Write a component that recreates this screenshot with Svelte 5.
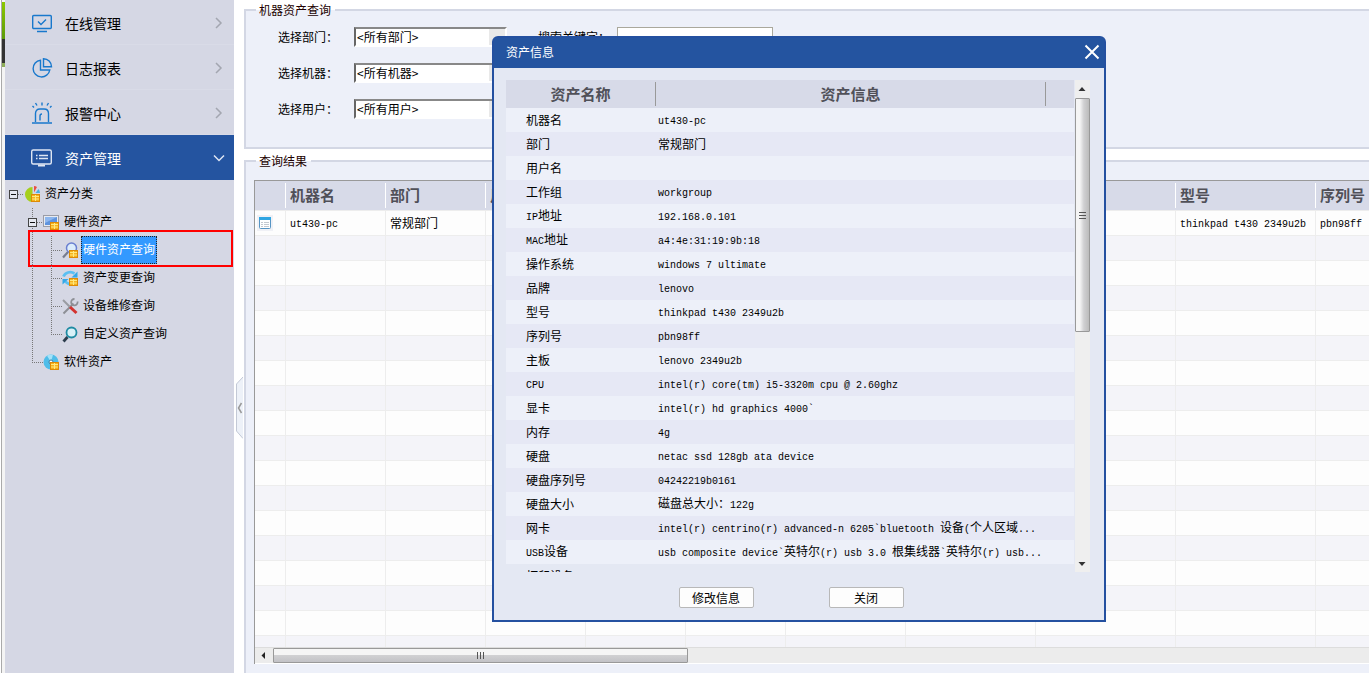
<script lang="ts">
  type TreeNode = { label: string; icon: string; cells: string[]; selected?: boolean };

  const menu = [
    { label: '在线管理', icon: 'monitor' },
    { label: '日志报表', icon: 'pie' },
    { label: '报警中心', icon: 'alarm' },
    { label: '资产管理', icon: 'asset' }
  ];
  let active = $state('资产管理');

  let tree = $state<TreeNode[]>([
    { label: '资产分类', icon: 'root', cells: ['box'] },
    { label: '硬件资产', icon: 'pc', cells: ['blank', 'boxline'] },
    { label: '硬件资产查询', icon: 'search', cells: ['blank', 'pass', 'tee'], selected: true },
    { label: '资产变更查询', icon: 'change', cells: ['blank', 'pass', 'tee'] },
    { label: '设备维修查询', icon: 'repair', cells: ['blank', 'pass', 'tee'] },
    { label: '自定义资产查询', icon: 'custom', cells: ['blank', 'pass', 'end'] },
    { label: '软件资产', icon: 'disc', cells: ['blank', 'end'] }
  ]);

  function select(node: TreeNode) {
    for (const n of tree) n.selected = n === node;
  }

  const filters = [
    { id: 'dept', label: '选择部门：', value: '<所有部门>' },
    { id: 'machine', label: '选择机器：', value: '<所有机器>' },
    { id: 'user', label: '选择用户：', value: '<所有用户>' }
  ];

  const columns = [
    { name: '', width: 31 },
    { name: '机器名', width: 100 },
    { name: '部门', width: 100 },
    { name: '用户名', width: 100 },
    { name: '', width: 100 },
    { name: '', width: 100 },
    { name: '', width: 120 },
    { name: '', width: 130 },
    { name: '', width: 140 },
    { name: '型号', width: 140 },
    { name: '序列号', width: 140 }
  ];
  const result = ['', 'ut430-pc', '常规部门', '', '', '', '', '', '', 'thinkpad t430 2349u2b', 'pbn98ff'];
  const emptyRows = Array.from({ length: 17 });

  const info = [
    ['机器名', 'ut430-pc'],
    ['部门', '常规部门'],
    ['用户名', ''],
    ['工作组', 'workgroup'],
    ['IP地址', '192.168.0.101'],
    ['MAC地址', 'a4:4e:31:19:9b:18'],
    ['操作系统', 'windows 7 ultimate'],
    ['品牌', 'lenovo'],
    ['型号', 'thinkpad t430 2349u2b'],
    ['序列号', 'pbn98ff'],
    ['主板', 'lenovo 2349u2b'],
    ['CPU', 'intel(r) core(tm) i5-3320m cpu @ 2.60ghz'],
    ['显卡', 'intel(r) hd graphics 4000`'],
    ['内存', '4g'],
    ['硬盘', 'netac ssd 128gb ata device'],
    ['硬盘序列号', '04242219b0161'],
    ['硬盘大小', '磁盘总大小：122g'],
    ['网卡', 'intel(r) centrino(r) advanced-n 6205`bluetooth 设备(个人区域...'],
    ['USB设备', 'usb composite device`英特尔(r) usb 3.0 根集线器`英特尔(r) usb...'],
    ['打印设备', '']
  ];

  let open = $state(true);

  // latin runs are set in the half-width face, the rest in the CJK one
  function runs(text: string) {
    return text.match(/[\x00-\x7f]+|[^\x00-\x7f]+/g) ?? [];
  }
</script>

{#snippet mixed(text: string)}{#each runs(text) as run}{#if run.charCodeAt(0) < 128}<span class="half">{run}</span>{:else}{run}{/if}{/each}{/snippet}

{#snippet coins()}
  <rect x="7.500" y="8.500" width="8" height="7" fill="#f6b21b" stroke="#dd8a06" />
  <path d="M8 10.500h7M8 13h7M11.500 9v6" stroke="#ffe880" fill="none" />
{/snippet}

<div class="app">
  <div class="edge"><i class="green"></i><i class="dark"></i><i class="lime"></i></div>

  <aside class="sidebar">
    <nav>
      {#each menu as item}
        <button class="menu-item" class:active={active === item.label} onclick={() => (active = item.label)}>
          <svg class="menu-icon" width="24" height="24" viewBox="0 0 24 24" fill="none" stroke="currentColor" stroke-width="1.4">
            {#if item.icon === 'monitor'}
              <rect x="2.700" y="4.500" width="18.600" height="13" rx="1" />
              <path d="M8 10.500l3 3 5-5M7 20.500h10" />
            {:else if item.icon === 'pie'}
              <path d="M10.500 4.200a8.400 8.400 0 1 0 9.300 9.800h-9.300z" />
              <path d="M13.500 2.700v8h8a8 8 0 0 0-8-8z" />
            {:else if item.icon === 'alarm'}
              <path d="M5.500 21v-8.500q0-4.500 4.500-4.500h4q4.500 0 4.500 4.500V21M2 22h20M10 19.500v-4.500q0-2 2-2" />
              <path d="M12 1.500v3M5.500 2l1.500 2.500M18.500 2l-1.500 2.500M2.500 5l1.500 1.500M21.500 5l-1.500 1.500" />
            {:else}
              <rect x="1.700" y="4" width="19.600" height="14" rx="1.500" />
              <path d="M6 9.500h1.500M9 9.500h9M6 12.500h1.500M9 12.500h9" />
              <path d="M8 19.500h7" stroke-width="2" />
            {/if}
          </svg>
          <span>{item.label}</span>
          <svg class="chevron" width="12" height="14" viewBox="0 0 12 14" fill="none" stroke="currentColor" stroke-width="1.500">
            {#if active === item.label}
              <path d="M1 4.500l5 5 5-5" />
            {:else}
              <path d="M3 2l5 5-5 5" />
            {/if}
          </svg>
        </button>
      {/each}
    </nav>

    <ul class="tree">
      {#each tree as node}
        <li class:marked={node.icon === 'search'}>
          {#each node.cells as cell}
            <svg width="19" height="28" viewBox="0 0 19 28" fill="none" stroke="#777" stroke-dasharray="1 1">
              {#if cell === 'pass'}
                <path d="M8.500 0v28" />
              {:else if cell === 'tee'}
                <path d="M8.500 0v28M8 14.500h11" />
              {:else if cell === 'end'}
                <path d="M8.500 0v14M8 14.500h11" />
              {:else if cell !== 'blank'}
                {#if cell === 'boxline'}<path d="M8.500 0v28" />{/if}
                <path d="M13 14.500h6" />
                <rect x="4.500" y="10.500" width="8" height="8" fill="#e6e8f0" stroke="#444" stroke-dasharray="none" />
                <path d="M6 14.500h5" stroke="#111" stroke-dasharray="none" />
              {/if}
            </svg>
          {/each}
          <svg class="node-icon" width="17" height="17" viewBox="0 0 17 17" fill="none">
            {#if node.icon === 'root'}
              <path d="M8.500 1a7.500 7.500 0 1 0 0 15h4V8h-4z" fill="#a6cf1c" />
              <path d="M10 6.500V0a7 7 0 0 1 3 1z" fill="#e94f45" />
              <path d="M11.500 7l3-4a7 7 0 0 1 1.500 4z" fill="#4aaee3" />
              {@render coins()}
            {:else if node.icon === 'pc'}
              <rect x=".5" y="1.500" width="15" height="11" fill="#e8eaf0" stroke="#9a9ca6" />
              <rect x="2" y="3" width="12" height="8" fill="#5f93dd" />
              <path d="M2 3h12l-12 6z" fill="#8db6ee" />
              {@render coins()}
            {:else if node.icon === 'search'}
              <path d="M1 15.500l5-5.500" stroke="#777c8e" stroke-width="2.200" />
              <circle cx="9.500" cy="6" r="5" fill="#dcecfb" stroke="#6a7fd0" stroke-width="1.500" />
              {@render coins()}
            {:else if node.icon === 'change'}
              <path d="M1.500 6.500a7 6 0 0 1 11-3" stroke="#5cc0f2" stroke-width="2.800" />
              <path d="M15.500 1.500v6h-6z" fill="#35a9e8" />
              <path d="M8.500 14a6 5.500 0 0 1-5-2.500" stroke="#5cc0f2" stroke-width="2.800" />
              <path d="M.5 9h6l-6 5.500z" fill="#35a9e8" />
              {@render coins()}
            {:else if node.icon === 'repair'}
              <path d="M1.500 15.500l10-10" stroke="#8d8f95" stroke-width="2" />
              <path d="M15.500 3.500a3.200 3.200 0 1 1-3-2.500" stroke="#8d8f95" stroke-width="1.800" />
              <path d="M1 2l7 7" stroke="#9a9ca2" stroke-width="2" />
              <path d="M8 9l6.500 6" stroke="#d3332f" stroke-width="3" />
            {:else if node.icon === 'custom'}
              <path d="M1.500 15.500l4-4.500" stroke="#2c3d4c" stroke-width="2.800" />
              <circle cx="9.500" cy="6.500" r="5" fill="#d7f1f7" stroke="#1f8ba3" stroke-width="1.800" />
            {:else}
              <circle cx="8" cy="8" r="7.500" fill="#4fbde9" />
              <path d="M8 8L4 1.700A7.500 7.500 0 0 1 10 .8z" fill="#a5e2f8" />
              <circle cx="8" cy="8" r="2" fill="#fff" stroke="#347b9e" />
              {@render coins()}
            {/if}
          </svg>
          <button class="node" class:selected={node.selected} onclick={() => select(node)}>{node.label}</button>
        </li>
      {/each}
    </ul>
  </aside>

  <div class="gutter">
    <button class="collapse" aria-label="收起">
      <svg width="8" height="64" viewBox="0 0 8 64" fill="none">
        <path d="M8 1L1.500 8v47L8 62.500z" fill="#edf1f8" />
        <path d="M8 1L1.500 8v47L8 62.500" stroke="#c3c9d6" />
        <path d="M6.500 27L3.500 32l3 5" stroke="#999" stroke-width="1.500" />
      </svg>
    </button>
  </div>

  <main>
    <fieldset class="query">
      <legend>机器资产查询</legend>
      <div class="filters">
        {#each filters as f, i}
          <div class="filter">
            <label for={f.id}>{f.label}</label>
            <select id={f.id}><option>{f.value}</option></select>
            {#if i === 0}
              <label class="key-label" for="keyword">搜索关键字：</label>
              <input id="keyword" type="text" />
            {/if}
          </div>
        {/each}
      </div>
    </fieldset>

    <fieldset class="results">
      <legend>查询结果</legend>
      <div class="grid">
        <div class="grid-view">
          <table>
            <colgroup>
              {#each columns as c}<col style:width="{c.width}px" />{/each}
            </colgroup>
            <thead>
              <tr>
                {#each columns as c}<th><span>{c.name}</span></th>{/each}
              </tr>
            </thead>
            <tbody>
              <tr>
                {#each result as value, i}
                  <td>
                    {#if i === 0}
                      <svg class="row-icon" width="16" height="16" viewBox="0 0 16 16">
                        <rect x="2.500" y="2.500" width="11" height="11" rx="1" fill="#fff" stroke="#5795c4" />
                        <path d="M2 2h12v3H2z" fill="#2fa5e2" />
                        <path d="M4 7.500h2M7 7.500h5M4 9.500h2M7 9.500h5M4 11.500h2M7 11.500h5" stroke="#c4c9d0" />
                      </svg>
                    {:else}{@render mixed(value)}{/if}
                  </td>
                {/each}
              </tr>
              {#each emptyRows as _}
                <tr>{#each columns as _c}<td></td>{/each}</tr>
              {/each}
            </tbody>
          </table>
        </div>
        <div class="hbar">
          <svg width="18" height="15" viewBox="0 0 18 15"><path d="M10 4v7L6.500 7.500z" fill="#222" /></svg>
          <div class="thumb"><i></i><i></i><i></i></div>
        </div>
      </div>
    </fieldset>
  </main>

  {#if open}
    <div class="dialog" role="dialog" aria-labelledby="dlg-title">
      <header>
        <h2 id="dlg-title">资产信息</h2>
        <button class="close" aria-label="关闭窗口" onclick={() => (open = false)}>
          <svg width="16" height="16" viewBox="0 0 16 16"><path d="M1.500 1.500l13 13M14.500 1.500l-13 13" stroke="#fff" stroke-width="2" /></svg>
        </button>
      </header>
      <div class="pane">
        <div class="pane-view">
          <table>
            <colgroup><col class="c-name" /><col /><col class="c-rest" /></colgroup>
            <thead>
              <tr><th><span>资产名称</span></th><th><span>资产信息</span></th><th></th></tr>
            </thead>
            <tbody>
              {#each info as [name, value]}
                <tr><td>{@render mixed(name)}</td><td colspan="2">{@render mixed(value)}</td></tr>
              {/each}
            </tbody>
          </table>
        </div>
        <div class="vbar">
          <svg width="15" height="18" viewBox="0 0 15 18"><path d="M3.500 11h7L7 7z" fill="#333" /></svg>
          <div class="thumb"><i></i><i></i><i></i></div>
          <svg width="15" height="18" viewBox="0 0 15 18"><path d="M3.500 8h7L7 12z" fill="#333" /></svg>
        </div>
      </div>
      <footer>
        <button>修改信息</button>
        <button onclick={() => (open = false)}>关闭</button>
      </footer>
    </div>
  {/if}
</div>

<style>
  :global(body) {
    margin: 0;
    background: #fff;
  }

  .app {
    position: relative;
    display: flex;
    height: 100vh;
    overflow: hidden;
    font: 12px/16px "Noto Sans CJK SC", sans-serif;
    color: #000;
  }
  .app :is(button, input, select) {
    font: inherit;
    color: inherit;
  }
  button {
    padding: 0;
    border: 0;
    background: none;
    cursor: pointer;
  }
  svg {
    display: block;
    flex: none;
  }
  .half {
    font-family: "Liberation Mono", monospace;
    font-size: 10px;
    white-space: pre;
  }

  .edge {
    box-sizing: border-box;
    flex: none;
    width: 5px;
    padding: 2px 0 0 1px;
    background: linear-gradient(90deg, #fff 1px, #aaa 1px, #aaa 2px, #f4f4f4 2px);
  }
  .edge i {
    display: block;
    margin-left: 1px;
  }
  .green {
    height: 37px;
    background: linear-gradient(#8cc800, #5b9a0a);
  }
  .dark {
    height: 24px;
    background: #333;
  }
  .lime {
    height: 4px;
    background: #8fae5a;
  }

  .sidebar {
    flex: none;
    width: 229px;
    background: #d5d7e4;
  }
  .menu-item {
    display: flex;
    align-items: center;
    box-sizing: border-box;
    width: 100%;
    height: 45px;
    padding: 2px 9px 0 25px;
    border-bottom: 1px solid #d9dbe7;
    text-align: left;
  }
  .app .menu-item {
    font-size: 14px;
  }
  .menu-item span {
    flex: 1;
    margin-left: 11px;
  }
  .menu-icon {
    color: #1878cc;
  }
  .chevron {
    color: #a3a6b0;
  }
  .menu-item.active {
    background: #2454a0;
    border-color: #2454a0;
  }
  .app .menu-item.active {
    color: #fff;
  }
  .active .menu-icon,
  .active .chevron {
    color: #dfe6f3;
  }

  .tree {
    margin: 0;
    padding: 0;
    list-style: none;
  }
  .tree li {
    position: relative;
    display: flex;
    align-items: center;
    height: 28px;
  }
  .node {
    height: 28px;
    padding: 0 1px 2px;
    margin-left: 2px;
    border: 1px solid transparent;
  }
  .app .node.selected {
    background: #3399ff;
    border: 1px dotted #222;
    color: #fff;
  }
  .marked::after {
    content: "";
    position: absolute;
    inset: -6px 1px -3px 23px;
    border: 2px solid #f00;
    pointer-events: none;
  }

  .gutter {
    flex: none;
    display: flex;
    flex-direction: column;
    justify-content: center;
    align-items: flex-end;
    box-sizing: border-box;
    width: 10px;
    padding: 142px 1px 0 0;
  }

  main {
    flex: 1;
    min-width: 0;
    display: flex;
    flex-direction: column;
    gap: 3px;
    margin-right: -20px;
    padding-top: 1px;
  }
  fieldset {
    min-width: 0;
    margin: 0;
    padding: 0;
    border: 2px solid #d3d7e4;
    background: #edf0f9;
  }
  legend {
    margin-left: 10px;
    padding: 0 4px 0 3px;
    background: linear-gradient(#fff 50%, #edf0f9 50%);
    color: #200;
    line-height: 18px;
  }
  .filters {
    padding: 0 0 20px 32px;
  }
  .filter {
    display: flex;
    align-items: center;
    height: 36px;
  }
  .filter label {
    width: 76px;
  }
  .filter .key-label {
    width: 79px;
    margin-left: 31px;
  }
  .filter select,
  .filter input {
    box-sizing: border-box;
    height: 20px;
    border-radius: 0;
  }
  .filter select {
    appearance: none;
    width: 153px;
    padding: 0 18px 0 1px;
    border: 2px solid;
    border-color: #888 #fff #fff #666;
    background: linear-gradient(#e9e9e9, #e9e9e9) right / 16px 100% no-repeat #fff;
  }
  .filter input {
    width: 156px;
    border: 1px solid #aaa89c;
    background: #fff;
  }

  .results {
    flex: 1;
    min-height: 0;
    border-bottom: 0;
  }
  .grid {
    display: flex;
    flex-direction: column;
    margin: 10px 0 0 8px;
    height: calc(100vh - 190px);
    border: solid #999;
    border-width: 1px 0 0 1px;
    background: #fff;
  }
  .grid-view {
    flex: 1;
    min-height: 0;
    overflow: hidden;
    background: #fdfdfd;
  }
  table {
    table-layout: fixed;
    border-collapse: separate;
    border-spacing: 0;
  }
  th {
    padding: 0;
    background: #d7dae8;
    color: #505058;
    font-size: 15px;
    font-weight: bold;
    white-space: nowrap;
    overflow: hidden;
  }
  td {
    box-sizing: border-box;
    padding: 0;
    white-space: nowrap;
    overflow: hidden;
  }
  .grid table {
    width: 1201px;
  }
  .grid th {
    height: 29px;
    text-align: left;
  }
  .grid th span {
    display: block;
    height: 25px;
    padding-left: 4px;
    border-right: 1px solid #fff;
    line-height: 24px;
  }
  .grid td {
    height: 25px;
    padding-left: 4px;
    border: solid #ededed;
    border-width: 1px 1px 0 0;
    background: #fdfdfd;
  }
  .grid tr:nth-child(even) td {
    background: #f4f4f9;
  }
  .grid td:first-child {
    padding-left: 2px;
  }
  .row-icon {
    background: #f0f1f6;
  }
  .hbar {
    display: flex;
    height: 15px;
    border-top: 1px solid #ddd;
    border-bottom: 1px solid #fff;
    background: #ececec;
  }
  .thumb {
    display: flex;
    align-items: center;
    justify-content: center;
    gap: 2px;
    box-sizing: border-box;
    border: 1px solid #999;
    border-radius: 1px;
  }
  .hbar .thumb {
    width: 415px;
    background: linear-gradient(#f5f5f5 45%, #d0d0d2 50%, #c2c2c6);
  }
  .hbar i {
    width: 1px;
    height: 7px;
    background: #555;
  }

  .dialog {
    position: absolute;
    left: 492px;
    top: 36px;
    box-sizing: border-box;
    width: 614px;
    border: 2px solid #2450a0;
    border-radius: 6px 6px 0 0;
    background: #e4e8f3;
  }
  .dialog header {
    display: flex;
    align-items: center;
    justify-content: space-between;
    height: 28px;
    padding: 0 4px 2px 12px;
    background: #2454a0;
    color: #fff;
  }
  .dialog h2 {
    margin: 0;
    font-size: 12px;
    font-weight: normal;
  }
  .pane {
    display: flex;
    height: 492px;
    margin: 12px 14px 0 12px;
  }
  .pane-view {
    flex: 1;
    min-width: 0;
    overflow: hidden;
  }
  .pane table {
    width: 100%;
  }
  .c-name {
    width: 150px;
  }
  .c-rest {
    width: 28px;
  }
  .pane th {
    height: 28px;
  }
  .pane th span {
    display: block;
    border-right: 1px solid #999;
    line-height: 24px;
  }
  .pane td {
    height: 24px;
    padding-left: 2px;
    background: #edf0f9;
  }
  .pane td:first-child {
    padding-left: 20px;
  }
  .pane tr:nth-child(even) td {
    background: #e6e8f5;
  }
  .pane tr:last-child td {
    background: #e4e8f3;
  }
  .vbar {
    width: 15px;
    margin-left: 1px;
    background: #efefef;
    display: flex;
    flex-direction: column;
  }
  .vbar .thumb {
    flex-direction: column;
    gap: 2px;
    height: 234px;
    margin-bottom: auto;
    background: linear-gradient(90deg, #f5f5f5 30%, #d0d0d2 60%, #bbb);
  }
  .vbar i {
    width: 7px;
    height: 1px;
    background: #555;
  }
  .dialog footer {
    display: flex;
    justify-content: center;
    gap: 75px;
    padding: 15px 20px 12px 4px;
  }
  .dialog footer button {
    box-sizing: border-box;
    width: 75px;
    height: 21px;
    border: 1px solid #b8b8b8;
    border-radius: 2px;
    background: #fdfdfd;
    line-height: 16px;
  }
</style>
